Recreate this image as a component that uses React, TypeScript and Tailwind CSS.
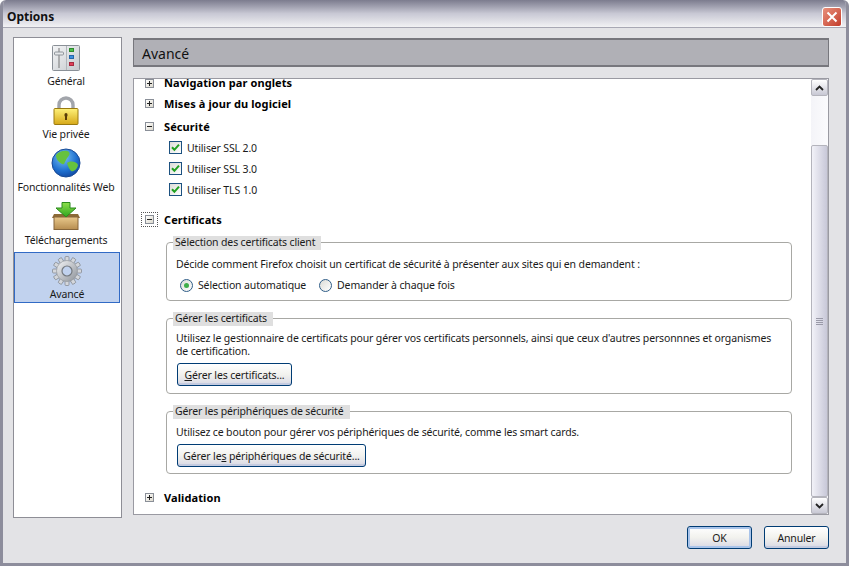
import React from "react";

const Exp = ({ open, focus }: { open?: boolean; focus?: boolean }) => (
  <span className={"flex items-center justify-center w-[17px] h-[15px] shrink-0 " + (focus ? "border border-dotted border-[#555]" : "")}>
    <span className="relative block w-[9px] h-[9px] border border-[#8a8f98] bg-gradient-to-br from-white to-[#dcd8cc]">
      <span className="absolute left-[1px] top-[3px] w-[5px] h-[1px] bg-[#222]" />
      {!open && <span className="absolute left-[3px] top-[1px] w-[1px] h-[5px] bg-[#222]" />}
    </span>
  </span>
);

const Section = ({ label, open, focus, cls }: { label: string; open?: boolean; focus?: boolean; cls: string }) => (
  <div className={"flex items-center " + cls}>
    <span className="w-[24px] ml-[7px] flex"><Exp open={open} focus={focus} /></span>
    <span className="font-bold text-[11px] tracking-[0.1px] text-black ml-[-1px]">{label}</span>
  </div>
);

const Check = ({ label }: { label: string }) => (
  <div className="flex items-center h-[21px] ml-[35px] gap-[5px]">
    <span className="w-[13px] h-[13px] border border-[#1c5180] bg-gradient-to-br from-[#dcdcd7] to-white flex items-center justify-center">
      <svg width="9" height="9" viewBox="0 0 9 9"><path d="M1 4.2 L3.4 6.8 L8 1.6" fill="none" stroke="#21a121" strokeWidth="2" /></svg>
    </span>
    <span>{label}</span>
  </div>
);

const Radio = ({ label, on }: { label: string; on?: boolean }) => (
  <span className="flex items-center gap-[5px]">
    <span className="w-[13px] h-[13px] rounded-full border border-[#2f5d87] bg-gradient-to-br from-[#dcdcd7] to-white flex items-center justify-center">
      {on && <span className="w-[5px] h-[5px] rounded-full bg-[#3fae4a]" />}
    </span>
    <span>{label}</span>
  </span>
);

const Group = ({ title, children, cls }: { title: string; children: React.ReactNode; cls: string }) => (
  <div className={"relative ml-[32px] w-[626px] border border-[#a8a8a4] rounded-[4px] px-[9px] " + cls}>
    <span className="absolute left-[6px] top-[-7px] bg-[#dfdfdf] px-[2px] pr-[6px] h-[14px] leading-[13px] whitespace-nowrap">{title}</span>
    {children}
  </div>
);

const Btn = ({ children, cls, def }: { children: React.ReactNode; cls: string; def?: boolean }) => (
  <span className={"flex items-center justify-center h-[23px] whitespace-nowrap rounded-[3px] border border-[#003c74] bg-gradient-to-b from-white via-[#f2f2ee] to-[#d8d8e4] " + (def ? "shadow-[inset_0_0_0_2px_#a9c4ea] " : "shadow-[inset_0_-2px_0_#c4cbe0] ") + cls}>
    {children}
  </span>
);

const Gear = () => {
  const teeth = Array.from({ length: 12 }, (_, i) => i * 30);
  return (
    <svg width="32" height="32" viewBox="0 0 32 32">
      <defs>
        <linearGradient id="gg" x1="0" y1="0" x2="1" y2="1"><stop offset="0" stopColor="#f4f5f7" /><stop offset="1" stopColor="#8d9299" /></linearGradient>
      </defs>
      {teeth.map((a) => (
        <rect key={a} x="14" y="1.5" width="4" height="6" rx="1" fill="#d4d7dc" stroke="#7e8389" strokeWidth="0.7" transform={`rotate(${a} 16 16)`} />
      ))}
      <circle cx="16" cy="16" r="10.5" fill="url(#gg)" stroke="#8b9096" strokeWidth="0.6" />
      <circle cx="16" cy="16" r="5" fill="#c1d2ee" stroke="#74797f" strokeWidth="1.2" />
    </svg>
  );
};

const General = () => (
  <svg width="28" height="26" viewBox="0 0 28 26">
    <defs><linearGradient id="gn" x1="0" y1="0" x2="1" y2="1"><stop offset="0" stopColor="#f4f5f6" /><stop offset="1" stopColor="#c5c9ce" /></linearGradient></defs>
    <rect x="0.5" y="0.5" width="27" height="25" rx="1" fill="url(#gn)" stroke="#8a9097" />
    <line x1="14.5" y1="1" x2="14.5" y2="25" stroke="#b0b5ba" />
    <line x1="7" y1="3" x2="7" y2="23" stroke="#777" />
    <rect x="2.5" y="7" width="9" height="3" rx="1" fill="#e6e8ea" stroke="#8e949a" />
    <rect x="17.5" y="3.5" width="4" height="3" fill="#4cc04c" stroke="#2d8a2d" />
    <rect x="17.5" y="10.5" width="4" height="3" fill="#3c8fe0" stroke="#2666a8" />
    <rect x="17.5" y="17.5" width="4" height="3" fill="#e0405a" stroke="#a52a40" />
  </svg>
);

const Lock = () => (
  <svg width="26" height="30" viewBox="0 0 26 30">
    <defs>
      <linearGradient id="lk" x1="0" y1="0" x2="0" y2="1"><stop offset="0" stopColor="#fff27a" /><stop offset="1" stopColor="#d6a818" /></linearGradient>
    </defs>
    <path d="M6 13 V9 A7 7 0 0 1 20 9 V13" fill="none" stroke="#a2a5ab" strokeWidth="3.4" />
    <rect x="1" y="12.5" width="24" height="16" rx="1" fill="url(#lk)" stroke="#9a7a10" />
    <ellipse cx="13" cy="19" rx="1.6" ry="2" fill="#5a3d08" />
    <rect x="12" y="19" width="2" height="5" fill="#5a3d08" />
  </svg>
);

const Globe = () => (
  <svg width="30" height="30" viewBox="0 0 30 30">
    <defs><radialGradient id="gb" cx="0.4" cy="0.3" r="0.8"><stop offset="0" stopColor="#7cc4f4" /><stop offset="0.6" stopColor="#1f70d0" /><stop offset="1" stopColor="#0f3f96" /></radialGradient></defs>
    <circle cx="15" cy="15" r="14" fill="url(#gb)" stroke="#1a4a94" />
    <path d="M5 7 C9 2 16 2 18 4 C20 7 16 9 15 12 C13 15 14 17 11 16 C8 14 5 12 5 7Z" fill="#66c23e" />
    <path d="M16 15 C20 12 26 14 27 17 C26 22 22 24 20 23 C18 21 17 18 16 15Z" fill="#66c23e" />
  </svg>
);

const Box = () => (
  <svg width="30" height="28" viewBox="0 0 30 28">
    <defs>
      <linearGradient id="bx" x1="0" y1="0" x2="0" y2="1"><stop offset="0" stopColor="#e9c98c" /><stop offset="1" stopColor="#b78d50" /></linearGradient>
      <linearGradient id="ar" x1="0" y1="0" x2="0" y2="1"><stop offset="0" stopColor="#8de04a" /><stop offset="1" stopColor="#2fa41f" /></linearGradient>
    </defs>
    <path d="M3 12 L1 16 H29 L27 12Z" fill="#8c6a36" />
    <rect x="3" y="15" width="24" height="12.5" fill="url(#bx)" stroke="#86653a" />
    <path d="M11 0.5 H19 V6 H25 L15 15 L5 6 H11Z" fill="url(#ar)" stroke="#2b8a1c" />
  </svg>
);

const Nav = ({ icon, label, active, h, gap }: { icon: React.ReactNode; label: string; active?: boolean; h: string; gap: string }) => (
  <div className={"flex flex-col items-center justify-end " + h + " " + (active ? "bg-[#c1d2ee] border border-[#316ac5] mr-[1px] pb-[1px]" : "pb-[2px] pr-[3px]")}>
    <span className="flex items-end justify-center h-[32px]">{icon}</span>
    <span className={"leading-[13px] whitespace-nowrap " + gap}>{label}</span>
  </div>
);

export default function App() {
  return (
    <div className="w-[849px] h-[566px] overflow-hidden flex flex-col bg-[#e3e3e6] text-[10.5px] tracking-[-0.14px] text-[#1a1a1a] border-x-[3px] border-b-[3px] border-[#8d8d9c] rounded-t-[6px] font-['Noto_Sans','Liberation_Sans',sans-serif] leading-[14px]">
      <div className="flex items-center justify-between h-[28px] shrink-0 pt-[7px] pl-[4px] pr-[4px] bg-gradient-to-b from-[#7c7c8e] via-[#c8c8d4] to-[#f2f2f4] border-b border-[#a8a8b4]">
        <span className="font-bold text-[12px] tracking-normal text-[#111]">Options</span>
        <span className="w-[20px] h-[20px] rounded-[3px] border border-white bg-gradient-to-br from-[#e8907c] to-[#c23a2a] flex items-center justify-center">
          <svg width="12" height="12" viewBox="0 0 12 12"><path d="M1.5 1.5 L10.5 10.5 M10.5 1.5 L1.5 10.5" stroke="#fff" strokeWidth="2" /></svg>
        </span>
      </div>
      <div className="flex flex-1 pl-[10px] pr-[17px] pt-[9px] min-h-0">
        <div className="w-[109px] h-[481px] shrink-0 bg-white border border-[#8e8e96] pt-[4px] flex flex-col">
          <Nav icon={<General />} label="Général" h="h-[48px]" gap="mt-[4px]" />
          <Nav icon={<Lock />} label="Vie privée" h="h-[53px]" gap="mt-[2px]" />
          <Nav icon={<Globe />} label="Fonctionnalités Web" h="h-[53px]" gap="mt-[3px]" />
          <Nav icon={<Box />} label="Téléchargements" h="h-[53px]" gap="mt-[4px]" />
          <Nav icon={<Gear />} label="Avancé" active h="h-[51px] mt-[3px]" gap="mt-[1px]" />
        </div>
        <div className="flex-1 ml-[11px] flex flex-col min-w-0">
          <div className="h-[29px] mt-[1px] pt-[2px] bg-[#b0b0b6] border-x border-y-2 border-[#77777d] flex items-center pl-[8px] text-[14px] tracking-normal text-[#111]">Avancé</div>
          <div className="mt-[11px] h-[437px] bg-white border border-[#9a9aa2] flex overflow-hidden">
            <div className="flex-1 overflow-hidden">
              <Section label="Navigation par onglets" cls="h-[14px] -mt-[3px] mb-[3px]" />
              <Section label="Mises à jour du logiciel" cls="h-[21px] mt-[2px]" />
              <Section label="Sécurité" open cls="h-[21px] mt-[2px]" />
              <Check label="Utiliser SSL 2.0" />
              <Check label="Utiliser SSL 3.0" />
              <Check label="Utiliser TLS 1.0" />
              <Section label="Certificats" open focus cls="h-[21px] mt-[9px]" />
              <Group title="Sélection des certificats client" cls="h-[59px] mt-[12px] pt-[14px]">
                <div>Décide comment Firefox choisit un certificat de sécurité à présenter aux sites qui en demandent :</div>
                <div className="flex gap-[13px] ml-[4px] mt-[7px]">
                  <Radio on label="Sélection automatique" />
                  <Radio label="Demander à chaque fois" />
                </div>
              </Group>
              <Group title="Gérer les certificats" cls="h-[76px] mt-[17px] pt-[13px]">
                <div className="leading-[13px]">Utilisez le gestionnaire de certificats pour gérer vos certificats personnels, ainsi que ceux d'autres personnnes et organismes de certification.</div>
                <Btn cls="w-[115px] mt-[5px] ml-[1px]"><span><u>G</u>érer les certificats...</span></Btn>
              </Group>
              <Group title="Gérer les périphériques de sécurité" cls="h-[63px] mt-[17px] pt-[13px]">
                <div>Utilisez ce bouton pour gérer vos périphériques de sécurité, comme les smart cards.</div>
                <Btn cls="w-[189px] mt-[5px] ml-[1px]"><span>Gérer le<u>s</u> périphériques de sécurité...</span></Btn>
              </Group>
              <Section label="Validation" cls="h-[21px] mt-[13px]" />
            </div>
            <div className="w-[17px] shrink-0 flex flex-col bg-gradient-to-r from-[#f4f4f8] to-[#fbfbfd]">
              <span className="h-[17px] rounded-[2px] border border-[#b4b4bc] bg-gradient-to-b from-white to-[#c8c8d4] flex items-center justify-center">
                <svg width="9" height="6" viewBox="0 0 9 6"><path d="M1 5 L4.5 1.5 L8 5" fill="none" stroke="#222" strokeWidth="1.8" /></svg>
              </span>
              <span className="h-[49px]" />
              <span className="flex-1 rounded-[2px] border border-[#b4b4bc] bg-gradient-to-r from-[#f2f2f8] to-[#c8c8d8] flex items-center justify-center">
                <span className="flex flex-col gap-[1px]">
                  <span className="block w-[7px] h-[1px] bg-[#9a9aa8]" />
                  <span className="block w-[7px] h-[1px] bg-[#9a9aa8]" />
                  <span className="block w-[7px] h-[1px] bg-[#9a9aa8]" />
                  <span className="block w-[7px] h-[1px] bg-[#9a9aa8]" />
                </span>
              </span>
              <span className="h-[17px] rounded-[2px] border border-[#b4b4bc] bg-gradient-to-b from-white to-[#c8c8d4] flex items-center justify-center">
                <svg width="9" height="6" viewBox="0 0 9 6"><path d="M1 1 L4.5 4.5 L8 1" fill="none" stroke="#222" strokeWidth="1.8" /></svg>
              </span>
            </div>
          </div>
        </div>
      </div>
      <div className="flex justify-end gap-[12px] pr-[17px] pb-[14px]">
        <Btn def cls="w-[65px]">OK</Btn>
        <Btn cls="w-[65px]">Annuler</Btn>
      </div>
    </div>
  );
}
